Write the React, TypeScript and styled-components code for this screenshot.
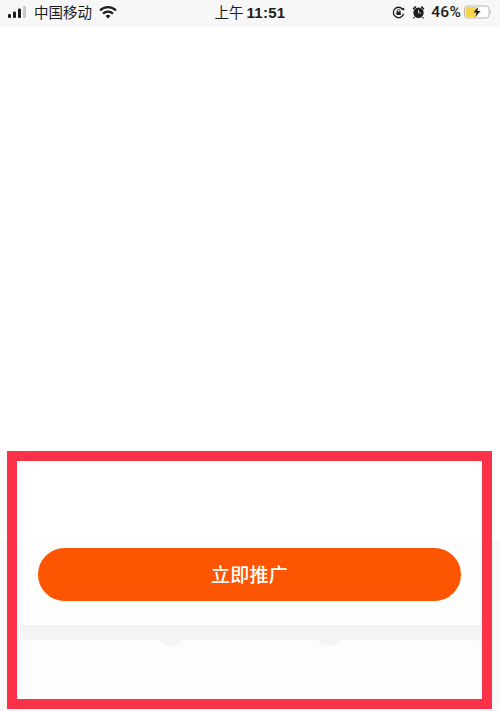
import React from "react"
import styled, { createGlobalStyle } from "styled-components"

const GlobalStyle = createGlobalStyle`
    html, body {
        margin: 0;
        padding: 0;
        background: #ffffff;
    }
`

const Page = styled.div`
    position: relative;
    display: flex;
    flex-direction: column;
    width: 500px;
    height: 711px;
    overflow: hidden;
    font-family: "Liberation Sans", "Noto Sans CJK SC", sans-serif;
    background: #ffffff;
`

const StatusBar = styled.div`
    display: grid;
    grid-template-columns: 1fr auto 1fr;
    align-items: center;
    flex: 0 0 27px;
    padding: 0 8px 3px 8px;
    box-sizing: border-box;
    background: #f7f7f7;
    color: #1c1c1c;
`

const StatusGroup = styled.div<{ $end?: boolean }>`
    display: flex;
    align-items: center;
    justify-content: ${({ $end }) => ($end ? "flex-end" : "flex-start")};
`

const Carrier = styled.span`
    margin: 0 7px 0 8px;
    font-family: "Noto Sans CJK SC", sans-serif;
    font-size: 14.5px;
    line-height: 20px;
`

const Clock = styled.span`
    display: flex;
    align-items: baseline;
    gap: 3px;
    font-family: "Noto Sans CJK SC", sans-serif;
    font-size: 14.5px;
    line-height: 20px;
`

const ClockTime = styled.b`
    font-family: "Liberation Sans", sans-serif;
    font-size: 15px;
    letter-spacing: 0.3px;
`

const Percent = styled.span`
    margin: 0 3px 0 6px;
    font-family: "Roboto", sans-serif;
    font-size: 15.5px;
    font-weight: 500;
    line-height: 20px;
    letter-spacing: 0.2px;
`

const IconSlot = styled.span`
    display: flex;
    margin-right: 7px;
`

const Blank = styled.div`
    flex: 1;
    background: #ffffff;
`

const Sheet = styled.div`
    flex: 0 0 171px;
    display: flex;
    flex-direction: column;
    background: #fafafa;
`

const ActionCard = styled.div`
    flex: 0 0 85px;
    margin: 0 19px 0 20px;
    padding: 8px 20px 0 18px;
    box-sizing: border-box;
    background: #fefefe;
    border-radius: 0 0 8px 8px;
`

const PromoteButton = styled.button`
    display: block;
    width: 100%;
    height: 53px;
    padding: 0 0 3px;
    border: 0;
    border-radius: 27px;
    background: #fe5502;
    color: #ffffff;
    font-family: "Noto Sans CJK SC", sans-serif;
    font-size: 19px;
    font-weight: 500;
    letter-spacing: 0.3px;
`

const Divider = styled.div`
    position: relative;
    flex: 0 0 15px;
    margin: 0 19px 0 20px;
    background: linear-gradient(#f2f2f2, #f6f6f6);
`

const Notch = styled.span<{ $left: number }>`
    position: absolute;
    top: 15px;
    left: ${({ $left }) => $left}px;
    width: 22px;
    height: 6px;
    border-radius: 0 0 11px 11px / 0 0 6px 6px;
    background: #f5f5f5;
`

const LowerCard = styled.div`
    flex: 1;
    margin: 0 19px 0 20px;
    background: #fdfdfd;
    border-radius: 6px 6px 0 0;
`

const Highlight = styled.div`
    position: absolute;
    left: 7px;
    top: 451px;
    width: 485px;
    height: 258px;
    box-sizing: border-box;
    border: 10px solid #fd3249;
    pointer-events: none;
`

const SignalIcon = () => (
    <svg width="18" height="14" viewBox="0 0 18 14">
        <rect x="0" y="9" width="3" height="4" rx="1" fill="#1c1c1c" />
        <rect x="5" y="6.5" width="3" height="6.5" rx="1" fill="#1c1c1c" />
        <rect x="10" y="3.5" width="3" height="9.5" rx="1" fill="#1c1c1c" />
        <rect x="15" y="1" width="3" height="12" rx="1" fill="#c8c8c8" />
    </svg>
)

const WifiIcon = () => (
    <svg width="18" height="13" viewBox="0 0 18 13">
        <path d="M1 4.4 A11.5 11.5 0 0 1 17 4.4" fill="none" stroke="#1c1c1c" strokeWidth="2.2" />
        <path d="M4 7.6 A7.2 7.2 0 0 1 14 7.6" fill="none" stroke="#1c1c1c" strokeWidth="2.2" />
        <path d="M6.6 10 A3.4 3.4 0 0 1 11.4 10 L9 12.6 Z" fill="#1c1c1c" />
    </svg>
)

const RotationLockIcon = () => (
    <svg width="13" height="13" viewBox="0 0 13 13">
        <path d="M11.6 7.6 A5.2 5.2 0 1 1 10.4 3" fill="none" stroke="#1c1c1c" strokeWidth="1.3" />
        <path d="M9 3.6 L12.2 4.6 L12.2 1.6 Z" fill="#1c1c1c" />
        <rect x="4.4" y="5.6" width="4.4" height="3.4" rx="0.5" fill="#1c1c1c" />
        <path d="M5.2 5.8 V4.9 A1.4 1.4 0 0 1 8 4.9 V5.8" fill="none" stroke="#1c1c1c" strokeWidth="0.8" />
    </svg>
)

const AlarmIcon = () => (
    <svg width="13" height="14" viewBox="0 0 13 14">
        <circle cx="6.5" cy="7.8" r="5.2" fill="#1c1c1c" />
        <path d="M0.6 3.6 L3.2 1 L4.4 2 L1.6 4.8 Z M12.4 3.6 L9.8 1 L8.6 2 L11.4 4.8 Z" fill="#1c1c1c" />
        <path d="M6.5 4.8 V8 H9" fill="none" stroke="#f7f7f7" strokeWidth="0.8" />
        <path d="M2.5 12 L1.4 13.4 M10.5 12 L11.6 13.4" stroke="#1c1c1c" strokeWidth="1.1" />
    </svg>
)

const BatteryIcon = () => (
    <svg width="28" height="14" viewBox="0 0 28 14">
        <rect x="0.5" y="1" width="24.5" height="12" rx="3" fill="#ffffff" stroke="#b9b9b9" />
        <rect x="1.5" y="2" width="11.5" height="10" rx="2" fill="#f7d24a" />
        <path d="M26.2 5 C27.4 5.4 27.4 8.6 26.2 9 Z" fill="#b9b9b9" />
        <path d="M14.2 2 L9.4 7.6 H12.6 L11.4 12 L16.6 6 H13.4 Z" fill="#1c1c1c" />
    </svg>
)

const App: React.FC = () => (
    <Page>
        <GlobalStyle />
        <StatusBar>
            <StatusGroup>
                <SignalIcon />
                <Carrier>中国移动</Carrier>
                <WifiIcon />
            </StatusGroup>
            <Clock>
                上午
                <ClockTime>11:51</ClockTime>
            </Clock>
            <StatusGroup $end>
                <IconSlot>
                    <RotationLockIcon />
                </IconSlot>
                <AlarmIcon />
                <Percent>46%</Percent>
                <BatteryIcon />
            </StatusGroup>
        </StatusBar>
        <Blank />
        <Sheet>
            <ActionCard>
                <PromoteButton>立即推广</PromoteButton>
            </ActionCard>
            <Divider>
                <Notch $left={140} />
                <Notch $left={298} />
            </Divider>
            <LowerCard />
        </Sheet>
        <Highlight />
    </Page>
)

export default App
